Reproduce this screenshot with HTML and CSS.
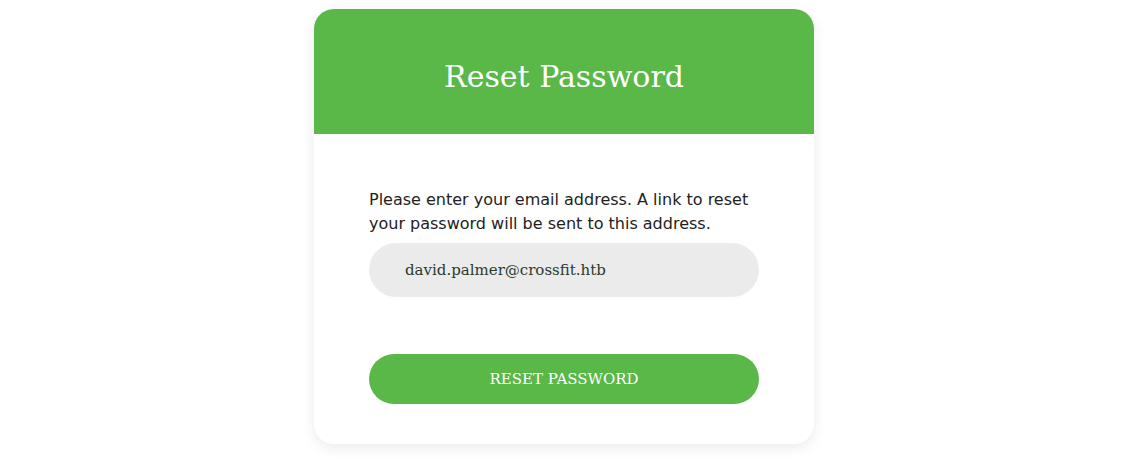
FILE: index.html
```html
<!DOCTYPE html>
<html>
<head>
<meta charset="utf-8">
<link rel="stylesheet" href="styles.css">
</head>
<body>
<div class="page">
  <div class="card">
    <div class="card-header">
      <h1 class="title">Reset Password</h1>
    </div>
    <form class="card-body">
      <p class="intro">Please enter your email address. A link to reset your password will be sent to this address.</p>
      <input class="email" type="text" value="david.palmer@crossfit.htb">
      <button class="submit" type="button">RESET PASSWORD</button>
    </form>
  </div>
</div>
</body>
</html>
```

FILE: styles.css
```css
html, body {
  margin: 0;
  padding: 0;
  background: #ffffff;
}
.page {
  display: flex;
  justify-content: center;
  padding: 9px 7px 20px 0;
}
.card {
  width: 500px;
  background: #ffffff;
  border-radius: 20px;
  overflow: hidden;
  box-shadow: 0 4px 14px rgba(0, 0, 0, 0.08);
}
.card-header {
  height: 125px;
  background: #59b848;
  display: flex;
  align-items: center;
  justify-content: center;
}
.title {
  margin: 10px 0 0 0;
  font-family: "DejaVu Serif", serif;
  font-weight: normal;
  font-size: 30px;
  color: #ffffff;
}
.card-body {
  display: flex;
  flex-direction: column;
  padding: 54px 55px 40px 55px;
}
.intro {
  margin: 0 0 7px 0;
  font-family: "DejaVu Sans", sans-serif;
  font-size: 16px;
  line-height: 24px;
  color: #222222;
}
.email {
  height: 54px;
  box-sizing: border-box;
  border: none;
  outline: none;
  border-radius: 27px;
  background: #ebebeb;
  padding: 0 36px;
  font-family: "DejaVu Serif", serif;
  font-size: 15px;
  color: #2b3a2b;
}
.submit {
  margin-top: 57px;
  height: 50px;
  border: none;
  border-radius: 25px;
  background: #59b848;
  color: #ffffff;
  font-family: "DejaVu Serif", serif;
  font-size: 15px;
}
```
